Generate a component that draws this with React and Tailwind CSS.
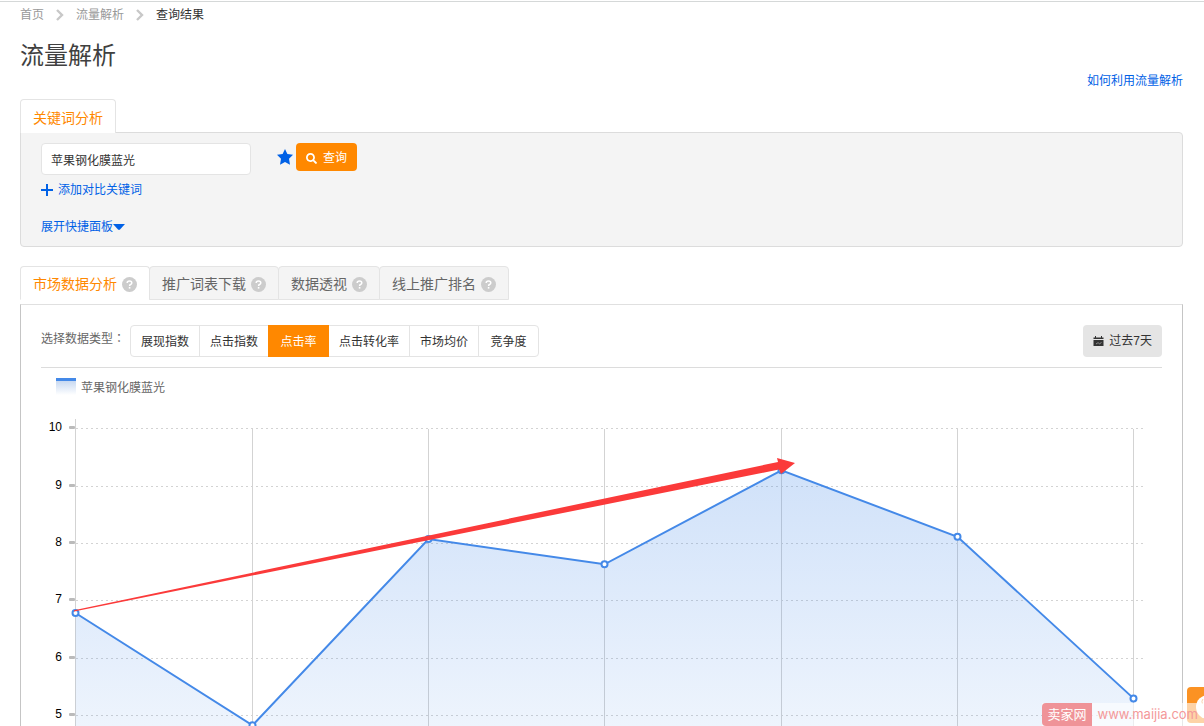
import { useState } from 'react'
import { FaSearch } from 'react-icons/fa'

const tabs = ['市场数据分析', '推广词表下载', '数据透视', '线上推广排名']
const metrics = ['展现指数', '点击指数', '点击率', '点击转化率', '市场均价', '竞争度']
const ticks = [10, 9, 8, 7, 6, 5]
const values = [6.78, 4.82, 8.07, 7.63, 9.27, 8.11, 5.29]

export default function App() {
  const [tab, setTab] = useState('市场数据分析')
  const [metric, setMetric] = useState('点击率')
  const [keyword, setKeyword] = useState('苹果钢化膜蓝光')

  return (
    <div className="relative h-screen overflow-hidden bg-white pt-px font-['Liberation_Sans','Noto_Sans_CJK_SC',sans-serif] text-xs text-[#333]">
      <div className="border-t border-[#d5d8d8] pl-5 pr-[21px]">
        <nav className="flex h-[25px] items-center gap-3 text-[#999]">
          <a href="#home">首页</a>
          <Chevron />
          <a href="#traffic">流量解析</a>
          <Chevron />
          <span className="text-[#333]">查询结果</span>
        </nav>

        <h1 className="mt-[13px] text-2xl leading-8 text-[#404040]">流量解析</h1>
        <div className="flex justify-end leading-[18px]">
          <a href="#help" className="text-[#0061e6]">如何利用流量解析</a>
        </div>

        {/* 关键词 */}
        <div className="mt-[9px] flex">
          <button className="relative z-10 -mb-px h-[34px] rounded-t border border-b-0 border-[#e4e4e4] bg-white px-3 pt-[2px] text-sm text-[#ff8800]">
            关键词分析
          </button>
        </div>
        <div className="rounded-b rounded-tr border border-[#dcdcdc] bg-[#f4f4f4] px-5 pb-[10px] pt-[10px]">
          <form className="flex items-start" onSubmit={(e) => e.preventDefault()}>
            <input
              aria-label="关键词"
              value={keyword}
              onChange={(e) => setKeyword(e.target.value)}
              className="h-8 w-[210px] rounded border border-[#e4e4e4] bg-white px-[9px] outline-none"
            />
            <button type="button" aria-label="收藏" className="ml-[26px] flex h-7 items-center text-[#0061e6]">
              <svg className="h-4 w-4" viewBox="0 0 16 16" fill="currentColor">
                <path d="M8 0L10.400 5.100L16 5.800L12 9.800L13 15.700L8 12.900L3 15.700L4 9.800L0 5.800L5.600 5.100Z" />
              </svg>
            </button>
            <button type="submit" className="ml-[3px] flex h-7 items-center rounded bg-[#ff8800] px-[10px] pt-[2px] text-white">
              <FaSearch className="mr-[6px] h-[11px] w-[11px]" />
              查询
            </button>
          </form>
          <a href="#add" className="mt-[6px] flex items-center gap-[5px] leading-[18px] text-[#0061e6]">
            <svg className="h-3 w-3" viewBox="0 0 12 12" fill="currentColor">
              <path d="M5 0h2v5h5v2H7v5H5V7H0V5h5z" />
            </svg>
            添加对比关键词
          </a>
          <a href="#panel" className="mt-[19px] flex items-center leading-[18px] text-[#0061e6]">
            展开快捷面板
            <svg className="h-[6px] w-3" viewBox="0 0 12 6" fill="currentColor">
              <path d="M0 0h12L7 5.500Q6 6.300 5 5.500z" />
            </svg>
          </a>
        </div>

        {/* 数据 */}
        <div className="mt-[19px] flex">
          {tabs.map((name) => (
            <button
              key={name}
              onClick={() => setTab(name)}
              className={`-mr-px flex h-[34px] items-center gap-[5px] rounded-t border border-[#e4e4e4] px-3 pt-[2px] text-sm ${
                tab === name ? 'border-b-transparent bg-white text-[#ff8800]' : 'bg-[#f4f4f4] text-[#666]'
              }`}
            >
              {name}
              <Help />
            </button>
          ))}
        </div>
        <div className="mt-1 border border-b-0 border-x-[#c5c5c5] border-t-[#e0e0e0] px-5 pt-5">
          <div className="flex items-start border-b border-[#dcdcdc] pb-[10px]">
            <span className="w-[89px] shrink-0 leading-[26px] text-[#666]">
              选择数据类型
              <span className="font-['Noto_Sans_CJK_TC',sans-serif]" lang="zh-Hant">：</span>
            </span>
            <div className="flex">
              {metrics.map((name) => (
                <button
                  key={name}
                  onClick={() => setMetric(name)}
                  className={`-mr-px h-8 min-w-[61px] border px-[10px] pt-[2px] first:rounded-l last:rounded-r ${
                    metric === name ? 'relative border-[#ff8800] bg-[#ff8800] text-white' : 'border-[#e4e4e4] bg-white'
                  }`}
                >
                  {name}
                </button>
              ))}
            </div>
            <button className="ml-auto flex h-8 items-center gap-[5px] rounded bg-[#e5e5e5] px-[10px]">
              <svg className="h-[11px] w-[11px]" viewBox="0 0 11 11">
                <path d="M0.500 3V1.500H2V0h1v1.500h5V0h1v1.500h1.500V3zM0.500 4h10v6H0.500z" fill="#333" />
                <path d="M3 8L4.500 7h1L6.500 7.800L8.500 6.500" fill="none" stroke="#aaa" strokeWidth="0.800" />
              </svg>
              过去7天
            </button>
          </div>
          <div className="ml-[15px] mt-[10px] flex h-[18px] items-start gap-[5px] text-[#666]">
            <span className="h-[17px] w-5 border-t-[3px] border-[#4489e8] bg-linear-to-b from-[#c8d9f1] to-white" />
            <span className="leading-5">{keyword}</span>
          </div>
          <Chart />
        </div>
      </div>

      <div className="absolute bottom-[3px] right-0 h-9 w-[17px] overflow-hidden rounded-l-sm bg-[#fb9223]">
        <svg className="h-9 w-[17px]" viewBox="0 0 17 36">
          <circle cx="21" cy="20" r="12" fill="#fff" />
          <path d="M16 12Q14 14 15.500 17" fill="none" stroke="#f9d3ab" />
        </svg>
      </div>
      <div className="absolute bottom-0 right-0 flex h-[23px] items-center bg-white/60">
        <span className="flex h-full items-center rounded-l-sm bg-[#ef9398] px-[5px] text-[13px] text-white">卖家网</span>
        <span className="pl-[6px] pr-[6px] font-['Inter',sans-serif] text-[13px] text-[#f4999a]">www.maijia.com</span>
      </div>
    </div>
  )
}

function Chart() {
  const x = (i) => 34.5 + Math.ceil(i * 176.3)
  const y = (v) => 28.5 + (10 - v) * 57.3
  const points = values.map((v, i) => `${x(i)},${y(v)}`).join(' ')

  return (
    <svg className="mt-1 block w-full" viewBox="0 0 1121 360">
      <defs>
        <linearGradient id="area" gradientUnits="userSpaceOnUse" x1="0" y1="70" x2="0" y2="330">
          <stop offset="0" stopColor="#4489e8" stopOpacity="0.250" />
          <stop offset="1" stopColor="#4489e8" stopOpacity="0.090" />
        </linearGradient>
      </defs>

      {ticks.map((t) => {
        const row = Math.floor(y(t) + 0.4)
        return (
          <g key={t}>
            <line x1="35" x2="1102" y1={row + 0.5} y2={row + 0.5} stroke="#d3d3d3" strokeDasharray="2 3" />
            <rect x="28" y={row - 2} width="6" height="3" rx="1" fill="#bbb" />
            <text x="21" y={row + 3} textAnchor="end" fontSize="12" fill="#000">{t}</text>
          </g>
        )
      })}
      {values.map((v, i) => (
        <line key={i} x1={x(i)} x2={x(i)} y1={i === 0 ? 19 : 29} y2="360" stroke="#d3d3d3" />
      ))}

      <polygon points={`${x(0)},360 ${points} ${x(6)},360`} fill="url(#area)" />
      <polyline points={points} fill="none" stroke="#4489e8" strokeWidth="2" />
      {values.map((v, i) => (
        <circle key={i} cx={x(i)} cy={y(v)} r="3" fill="#fff" stroke="#4489e8" strokeWidth="2" />
      ))}

      <path d="M33 210.200L737 62L736 58L754 63L740 74L738 69.500L33 211.500Z" fill="#fb3a3a" />
    </svg>
  )
}

function Chevron() {
  return (
    <svg className="h-3 w-2" viewBox="0 0 8 12" fill="none" stroke="#c8c8c8" strokeWidth="2.400">
      <path d="M1 1l5 5-5 5" />
    </svg>
  )
}

function Help() {
  return (
    <svg className="h-[15px] w-[15px]" viewBox="0 0 15 15">
      <circle cx="7.500" cy="7.500" r="7.500" fill="#ccc" />
      <path d="M5.200 6Q5.200 4 7.500 4T9.800 5.900Q9.800 6.900 8.500 7.500Q7.600 7.900 7.600 9" fill="none" stroke="#fff" strokeWidth="1.500" />
      <rect x="6.800" y="10" width="1.600" height="1.600" fill="#fff" />
    </svg>
  )
}
